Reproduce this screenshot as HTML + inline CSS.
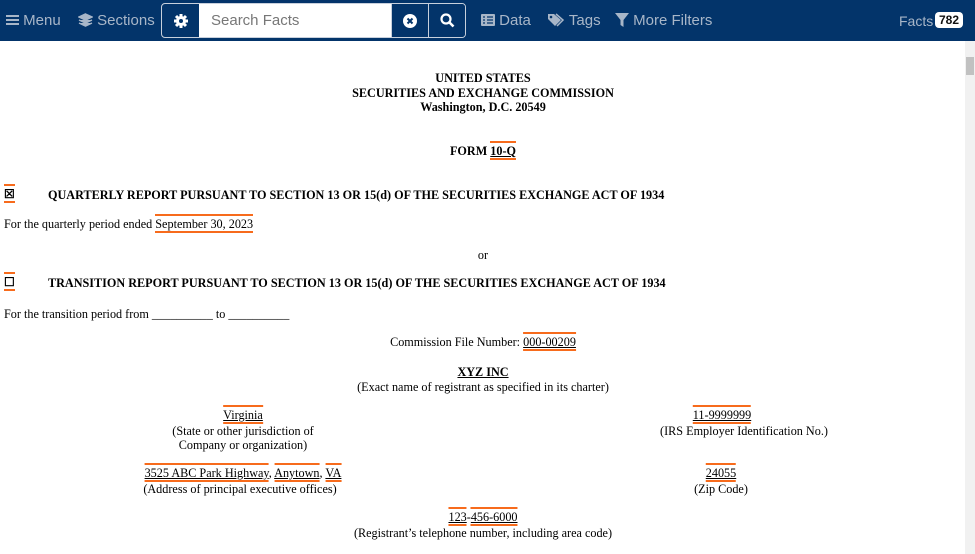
<!DOCTYPE html>
<html><head><meta charset="utf-8"><style>
body{margin:0;width:975px;height:554px;overflow:hidden;background:#fff;font-family:"Liberation Serif",serif;font-size:12.2px;color:#000;position:relative}
.nav{position:absolute;left:0;top:0;width:975px;height:41px;background:#03346a;color:#a8b6c8;font-family:"Liberation Sans",sans-serif;font-size:15px}
.nav span{position:absolute;top:12px}
.sb{position:absolute;left:161px;top:3px;width:303px;height:33px;border:1px solid #c8d0dc;border-radius:4px;overflow:hidden}
.sb .in{position:absolute;left:37px;top:0;width:192px;height:33px;background:#fff;color:#777;font-size:15px;line-height:33px;padding-left:12px;box-sizing:border-box}
.sb .b{position:absolute;top:0;height:33px;width:36px;border-left:1px solid #c8d0dc}
.t{position:absolute;white-space:nowrap}
.c{position:absolute;white-space:nowrap;transform:translateX(-50%)}
b{font-weight:bold}
.f{border-top:2px solid #f76b1c;border-bottom:2px solid #f76b1c;padding:1px 0 0 0;text-decoration:underline}
.sc{position:absolute;right:0;top:41px;width:10px;height:513px;background:#f1f1f1}
</style></head><body>
<div class="nav">
<span style="left:6px"><svg width="13" height="12" style="vertical-align:-1px"><rect y="1" width="13" height="2" fill="#a8b6c8"/><rect y="5" width="13" height="2" fill="#a8b6c8"/><rect y="9" width="13" height="2" fill="#a8b6c8"/></svg> Menu</span>
<span style="left:78px"><svg width="15" height="14" style="vertical-align:-2px"><path d="M7.5 1L14 4 7.5 7 1 4z M1 7l6.5 3 6.5-3 M1 10l6.5 3 6.5-3" fill="#a8b6c8" stroke="#a8b6c8" stroke-width="1.5"/></svg> Sections</span>
<div class="sb">
<svg style="position:absolute;left:12px;top:10px" width="14" height="14" viewBox="0 0 14 14"><circle cx="7" cy="7" r="5" fill="#fff"/><g stroke="#fff" stroke-width="3"><path d="M7 0v14M0 7h14M2 2l10 10M12 2L2 12"/></g><circle cx="7" cy="7" r="2" fill="#03346a"/></svg>
<div class="in">Search Facts</div>
<div class="b" style="left:229px;background:#03346a"><svg style="position:absolute;left:11px;top:10px" width="14" height="14"><circle cx="7" cy="7" r="7" fill="#fff"/><path d="M4.5 4.5l5 5M9.5 4.5l-5 5" stroke="#03346a" stroke-width="2"/></svg></div>
<div class="b" style="left:266px;background:#03346a"><svg style="position:absolute;left:11px;top:9px" width="15" height="15"><circle cx="6" cy="6" r="4.5" fill="none" stroke="#fff" stroke-width="2.2"/><path d="M9.5 9.5l4 4" stroke="#fff" stroke-width="2.6"/></svg></div>
</div>
<span style="left:481px"><svg width="14" height="12" style="vertical-align:-1px"><rect width="14" height="12" rx="1" fill="#a8b6c8"/><path d="M2 3h2M6 3h6M2 6h2M6 6h6M2 9h2M6 9h6" stroke="#03346a" stroke-width="1.3"/></svg> Data</span>
<span style="left:547px"><svg width="18" height="14" style="vertical-align:-2px"><path d="M1 1h6l7 6-6 6-7-7z" fill="#a8b6c8"/><path d="M9 1l7 6-6 6" fill="none" stroke="#a8b6c8" stroke-width="1.5"/><circle cx="4" cy="4" r="1.3" fill="#03346a"/></svg> Tags</span>
<span style="left:615px"><svg width="14" height="14" style="vertical-align:-2px"><path d="M0 0h14L8.5 7v7L5.5 12V7z" fill="#a8b6c8"/></svg> More Filters</span>
<span style="left:899px;font-size:14px;top:13px">Facts</span>
<span style="left:935px;top:12px;background:#fff;color:#111;font-size:12px;font-weight:bold;border-radius:4px;padding:1px 4px">782</span>
</div>
<div class="sc"><div style="position:absolute;top:16px;left:1px;width:8px;height:18px;background:#c1c1c1"></div></div>

<div class="c" style="left:483px;top:71px"><b>UNITED STATES</b></div>
<div class="c" style="left:483px;top:86px"><b>SECURITIES AND EXCHANGE COMMISSION</b></div>
<div class="c" style="left:483px;top:100px"><b>Washington, D.C. 20549</b></div>
<div class="c" style="left:483px;top:144px"><b>FORM <span class="f">10-Q</span></b></div>
<div class="t" style="left:4px;top:187px"><b><span class="f" style="text-decoration:none">☒</span></b></div>
<div class="t" style="left:48px;top:188px"><b>QUARTERLY REPORT PURSUANT TO SECTION 13 OR 15(d) OF THE SECURITIES EXCHANGE ACT OF 1934</b></div>
<div class="t" style="left:4px;top:217px">For the quarterly period ended <span class="f" style="text-decoration:none">September 30, 2023</span></div>
<div class="c" style="left:483px;top:248px">or</div>
<div class="t" style="left:4px;top:275px"><b><span class="f" style="text-decoration:none">☐</span></b></div>
<div class="t" style="left:48px;top:276px"><b>TRANSITION REPORT PURSUANT TO SECTION 13 OR 15(d) OF THE SECURITIES EXCHANGE ACT OF 1934</b></div>
<div class="t" style="left:4px;top:307px">For the transition period from __________ to __________</div>
<div class="c" style="left:483px;top:335px">Commission File Number: <span class="f">000-00209</span></div>
<div class="c" style="left:483px;top:365px"><b><u>XYZ INC</u></b></div>
<div class="c" style="left:483px;top:380px">(Exact name of registrant as specified in its charter)</div>
<div class="c" style="left:243px;top:408px"><span class="f">Virginia</span></div>
<div class="c" style="left:243px;top:424px">(State or other jurisdiction of</div>
<div class="c" style="left:243px;top:438px">Company or organization)</div>
<div class="c" style="left:722px;top:408px"><span class="f">11-9999999</span></div>
<div class="c" style="left:744px;top:424px">(IRS Employer Identification No.)</div>
<div class="c" style="left:243px;top:466px"><span class="f">3525 ABC Park Highway</span>, <span class="f">Anytown</span>, <span class="f">VA</span></div>
<div class="c" style="left:240px;top:482px">(Address of principal executive offices)</div>
<div class="c" style="left:721px;top:466px"><span class="f">24055</span></div>
<div class="c" style="left:721px;top:482px">(Zip Code)</div>
<div class="c" style="left:483px;top:510px"><span class="f">123</span>-<span class="f">456-6000</span></div>
<div class="c" style="left:483px;top:526px">(Registrant’s telephone number, including area code)</div>
</body></html>
